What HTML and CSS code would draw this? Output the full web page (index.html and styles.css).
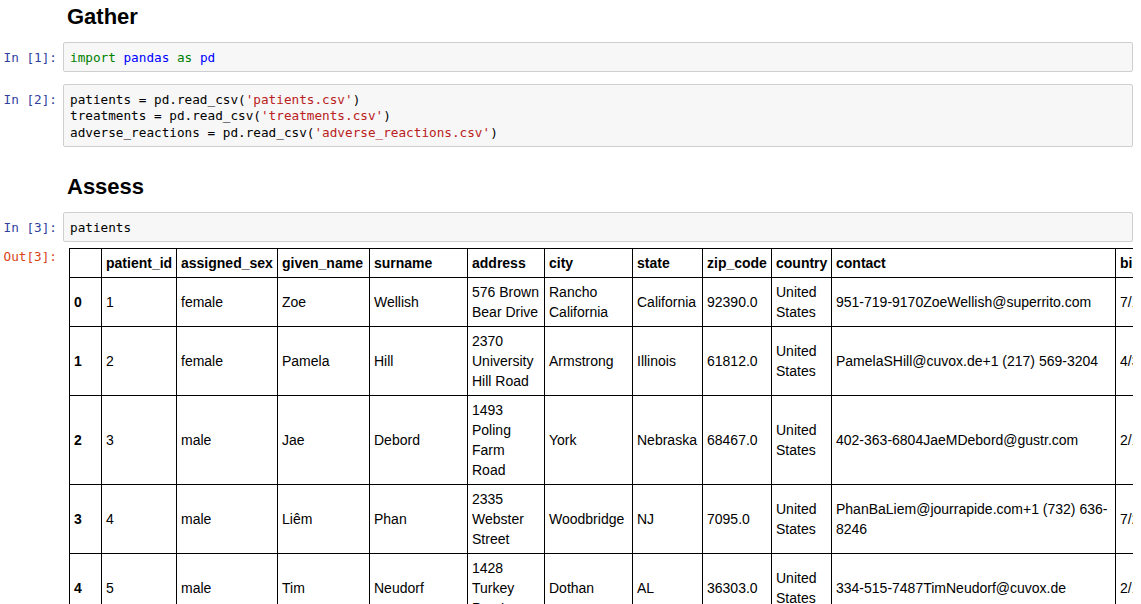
FILE: index.html
```html
<!DOCTYPE html>
<html>
<head>
<meta charset="utf-8">
<link rel="stylesheet" href="styles.css">
</head>
<body>
<div class="notebook">
  <div class="md">
    <div class="prompt"></div>
    <h2 class="md-text">Gather</h2>
  </div>

  <div class="cell">
    <div class="input">
      <div class="prompt in">In&nbsp;[1]:</div>
      <div class="input-area"><pre><span class="kw">import</span> <span class="var">pandas</span> <span class="kw">as</span> <span class="var">pd</span></pre></div>
    </div>
  </div>

  <div class="cell">
    <div class="input">
      <div class="prompt in">In&nbsp;[2]:</div>
      <div class="input-area"><pre>patients = pd.read_csv(<span class="str">'patients.csv'</span>)
treatments = pd.read_csv(<span class="str">'treatments.csv'</span>)
adverse_reactions = pd.read_csv(<span class="str">'adverse_reactions.csv'</span>)</pre></div>
    </div>
  </div>

  <div class="md">
    <div class="prompt"></div>
    <h2 class="md-text">Assess</h2>
  </div>

  <div class="cell">
    <div class="input">
      <div class="prompt in">In&nbsp;[3]:</div>
      <div class="input-area"><pre>patients</pre></div>
    </div>
    <div class="output">
      <div class="prompt out">Out[3]:</div>
      <div class="output-area">
        <table class="df">
          <colgroup>
            <col class="w-idx"><col class="w-pid"><col class="w-sex"><col class="w-given"><col class="w-sur"><col class="w-addr"><col class="w-city"><col class="w-state"><col class="w-zip"><col class="w-country"><col class="w-contact"><col class="w-birth"><col class="w-weight"><col class="w-height"><col class="w-bmi">
          </colgroup>
          <thead>
            <tr>
              <th></th><th>patient_id</th><th>assigned_sex</th><th>given_name</th><th>surname</th><th>address</th><th>city</th><th>state</th><th>zip_code</th><th>country</th><th>contact</th><th>birthdate</th><th>weight</th><th>height</th><th>bmi</th>
            </tr>
          </thead>
          <tbody>
            <tr>
              <th>0</th><td>1</td><td>female</td><td>Zoe</td><td>Wellish</td><td>576 Brown Bear Drive</td><td>Rancho California</td><td>California</td><td>92390.0</td><td>United States</td><td>951-719-9170ZoeWellish@superrito.com</td><td>7/10/1976</td><td>121.7</td><td>66</td><td>19.6</td>
            </tr>
            <tr>
              <th>1</th><td>2</td><td>female</td><td>Pamela</td><td>Hill</td><td>2370 University Hill Road</td><td>Armstrong</td><td>Illinois</td><td>61812.0</td><td>United States</td><td>PamelaSHill@cuvox.de+1 (217) 569-3204</td><td>4/3/1967</td><td>118.8</td><td>66</td><td>19.2</td>
            </tr>
            <tr>
              <th>2</th><td>3</td><td>male</td><td>Jae</td><td>Debord</td><td>1493 Poling Farm Road</td><td>York</td><td>Nebraska</td><td>68467.0</td><td>United States</td><td>402-363-6804JaeMDebord@gustr.com</td><td>2/19/1980</td><td>177.8</td><td>71</td><td>24.8</td>
            </tr>
            <tr>
              <th>3</th><td>4</td><td>male</td><td>Liêm</td><td>Phan</td><td>2335 Webster Street</td><td>Woodbridge</td><td>NJ</td><td>7095.0</td><td>United States</td><td>PhanBaLiem@jourrapide.com+1 (732) 636-<wbr>8246</td><td>7/26/1951</td><td>220.9</td><td>70</td><td>31.7</td>
            </tr>
            <tr>
              <th>4</th><td>5</td><td>male</td><td>Tim</td><td>Neudorf</td><td>1428 Turkey Pen Lane</td><td>Dothan</td><td>AL</td><td>36303.0</td><td>United States</td><td>334-515-7487TimNeudorf@cuvox.de</td><td>2/18/1928</td><td>192.3</td><td>67</td><td>30.1</td>
            </tr>
          </tbody>
        </table>
      </div>
    </div>
  </div>
</div>
</body>
</html>
```

FILE: styles.css
```css
html, body {
  margin: 0;
  padding: 0;
  background: #fff;
}

body {
  font-family: "Liberation Sans", Arial, sans-serif;
  color: #000;
  overflow: hidden;
}

.notebook {
  padding: 0 8px 0 0;
  display: flex;
  flex-direction: column;
}

.md {
  display: flex;
  padding-top: 4px;
  margin-bottom: 13px;
}

.cell + .md {
  margin-top: 11px;
}

.prompt {
  width: 57px;
  padding-right: 6px;
  flex: none;
  text-align: right;
  font-family: "DejaVu Sans Mono", "Liberation Mono", monospace;
  font-size: 12.7px;
  line-height: 16.5px;
  white-space: nowrap;
}

.md-text {
  margin: 0;
  padding-left: 4px;
  font-size: 22px;
  line-height: 25px;
  font-weight: bold;
}

.cell {
  margin-bottom: 12px;
}

.input, .output {
  display: flex;
  align-items: flex-start;
}

.prompt.in {
  color: #303F9F;
  padding-top: 7.5px;
}

.prompt.out {
  color: #D84315;
  padding-top: 1px;
}

.input-area {
  flex: 1;
  min-width: 0;
  background: #f7f7f7;
  border: 1px solid #cfcfcf;
  border-radius: 2px;
  padding: 6.5px 6px 5px;
}

.input-area pre {
  margin: 0;
  font-family: "DejaVu Sans Mono", "Liberation Mono", monospace;
  font-size: 12.7px;
  line-height: 16.5px;
  color: #000;
}

.kw { color: #008000; }
.var { color: #0000ff; }
.str { color: #BA2121; }

.output {
  margin-top: 6px;
}

.output-area {
  flex: 1;
  min-width: 0;
  overflow: hidden;
  padding-left: 6px;
}

.df {
  border-collapse: collapse;
  table-layout: fixed;
  width: 1306px;
  font-size: 14px;
  line-height: 20px;
}

.df th, .df td {
  border: 1px solid #000;
  padding: 4px;
  text-align: left;
  vertical-align: middle;
}

.df th {
  font-weight: bold;
}

.w-idx { width: 32px; }
.w-pid { width: 75px; }
.w-sex { width: 101px; }
.w-given { width: 92px; }
.w-sur { width: 98px; }
.w-addr { width: 77px; }
.w-city { width: 88px; }
.w-state { width: 70px; }
.w-zip { width: 69px; }
.w-country { width: 60px; }
.w-contact { width: 284px; }
.w-birth { width: 90px; }
.w-weight { width: 60px; }
.w-height { width: 60px; }
.w-bmi { width: 50px; }
```
